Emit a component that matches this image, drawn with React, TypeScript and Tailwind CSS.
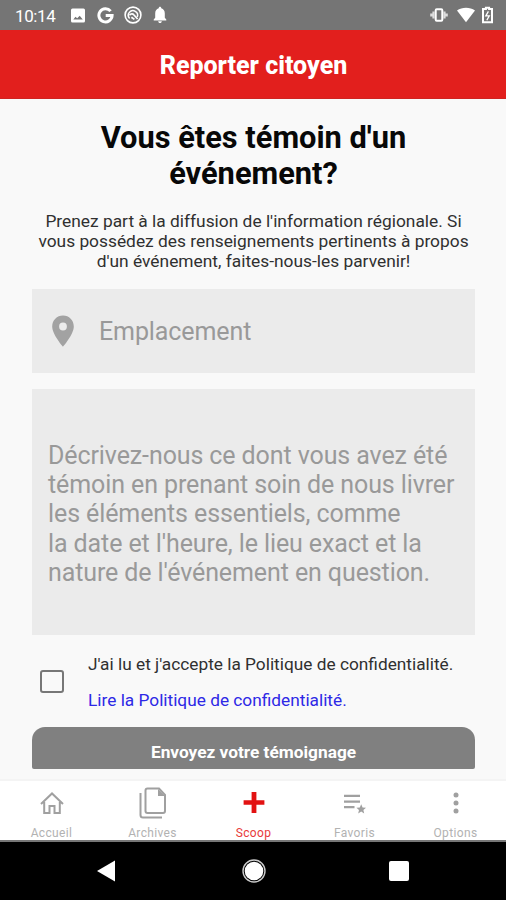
import type { ReactNode } from "react";

function StatusBar() {
  return (
    <header className="flex h-[30px] shrink-0 items-center bg-[#757575] pl-[15px] pr-[13px] text-white">
      <span className="w-[56px] pt-px text-[17px] leading-[30px] tracking-[-0.4px]">10:14</span>
      <svg className="h-[15px] w-[14px]" viewBox="0 0 14 15" fill="currentColor">
        <path fillRule="evenodd" d="M1.5 0.5h11a1.5 1.5 0 0 1 1.5 1.5v11a1.5 1.5 0 0 1-1.5 1.5h-11A1.5 1.5 0 0 1 0 13V2A1.5 1.5 0 0 1 1.5 .5ZM2.3 11.5h9.5L8.7 7.8 6.2 10.2 4.5 8.8Z" />
      </svg>
      <svg className="ml-[12px] h-[17px] w-[17px]" viewBox="0 0 17 17" fill="none" stroke="currentColor" strokeWidth="3">
        <path d="M13.6 4.1A6.6 6.6 0 1 0 15.1 8.5H8.7" />
      </svg>
      <svg className="ml-[10px] h-[18px] w-[18px]" viewBox="0 0 18 18" fill="none" stroke="currentColor">
        <circle cx="9" cy="9" r="7.9" strokeWidth="1.6" />
        <path d="M5.6 12.4A4.6 4.6 0 1 1 13.2 11" strokeWidth="1.5" />
        <path d="M5.4 9.2C7 7.4 8.8 7.6 10 9l3.6 4M7.4 11.2l3 2.2" strokeWidth="1.7" />
      </svg>
      <svg className="ml-[11px] h-[18px] w-[14px]" viewBox="0 0 14 18" fill="currentColor">
        <path d="M7 .8c.8 0 1.3.6 1.3 1.5 2.4.7 3.5 2.6 3.5 5.1v4.4l1.5 1.7v.9H.7v-.9l1.5-1.7V7.4c0-2.5 1.1-4.4 3.5-5.1C5.7 1.4 6.2.8 7 .8ZM5.2 15.2h3.6c0 1.1-.8 1.9-1.8 1.9s-1.8-.8-1.8-1.9Z" />
      </svg>
      <svg className="ml-auto h-[14px] w-[18px]" viewBox="0 0 18 14" fill="none" stroke="currentColor">
        <rect x="5.7" y="1.2" width="6.6" height="11.6" rx="1" strokeWidth="2" />
        <path d="M3.5 3.5v7M14.5 3.5v7M1.3 5.5v3M16.7 5.5v3" strokeWidth="2.2" opacity=".75" />
      </svg>
      <svg className="ml-[9px] h-[16px] w-[18px]" viewBox="0 0 18 16" fill="currentColor">
        <path d="M9 15.3 0 3.5C5-.2 13-.2 18 3.5Z" />
      </svg>
      <svg className="ml-[7px] h-[18px] w-[11px]" viewBox="0 0 11 18" fill="none" stroke="currentColor">
        <path d="M3.9 1.8h3.2v1.2h2.9v13.2H1V3h2.9Z" strokeWidth="2" />
        <path d="M6.4 5.3 3.8 9.8h3.5l-2.5 4.4" strokeWidth="1.3" />
      </svg>
    </header>
  );
}

function Tab({ label, active, children }: { label: string; active?: boolean; children: ReactNode }) {
  return (
    <div className={`flex w-[101px] flex-col items-center ${active ? "text-[#e21212]" : "text-[#a0a0a0]"}`}>
      <div className="flex h-[43px] shrink-0 items-center justify-center">{children}</div>
      <span className={`mt-[2px] shrink-0 text-[12px] leading-[14px] tracking-[0.35px] ${active ? "text-[#e83a3a]" : "text-[#b2b2b2]"}`}>{label}</span>
    </div>
  );
}

export default function App() {
  return (
    <div className="flex h-[900px] w-[506px] flex-col overflow-hidden bg-[#f9f9f9] font-[Roboto,sans-serif] whitespace-nowrap">
      <StatusBar />
      <div className="flex h-[69px] shrink-0 items-center justify-center border-b border-[#cf2421] bg-[#e21f1d] pt-[4px] pl-[1px] text-[25px] leading-[28px] font-extrabold text-white">
        Reporter citoyen
      </div>
      <main className="flex h-[680px] shrink-0 flex-col px-8">
        <h1 className="mt-[21px] ml-px text-center text-[30.8px] leading-[36px] font-bold text-[#080808]">
          Vous êtes témoin d'un<br />événement?
        </h1>
        <p className="mt-[19px] ml-px text-center text-[17.35px] leading-[20px] text-[#303030]">
          Prenez part à la diffusion de l'information régionale. Si<br />
          vous possédez des renseignements pertinents à propos<br />
          d'un événement, faites-nous-les parvenir!
        </p>
        <div className="mt-[18px] flex h-[84px] w-[443px] shrink-0 items-center bg-[#ebebeb] pl-[20px] text-[#999]">
          <svg className="h-[32px] w-[22px]" viewBox="0 0 22 32" fill="#a2a2a2">
            <path fillRule="evenodd" d="M11 .5C4.9.5.2 5.3.2 11.4.2 19.4 11 31.6 11 31.6S21.8 19.4 21.8 11.4C21.8 5.3 17.1.5 11 .5Zm0 7.1a3.9 3.9 0 1 1 0 7.8 3.9 3.9 0 0 1 0-7.8Z" />
          </svg>
          <span className="ml-[25px] pt-[2px] text-[25px] leading-[30px] tracking-[-0.1px]">Emplacement</span>
        </div>
        <div className="mt-[16px] flex h-[246px] w-[443px] shrink-0 items-center bg-[#ebebeb] pt-[4px] pl-[16px] text-[25px] leading-[29.1px] tracking-[-0.1px] text-[#999]">
          <p>
            Décrivez-nous ce dont vous avez été<br />
            témoin en prenant soin de nous livrer<br />
            les éléments essentiels, comme<br />
            la date et l'heure, le lieu exact et la<br />
            nature de l'événement en question.
          </p>
        </div>
        <div className="flex h-[92px] shrink-0 items-center pl-[8px] text-[17.28px]">
          <span className="h-[23px] w-[24px] rounded-[3px] border-[2px] border-[#777]" />
          <div className="ml-[24px] flex flex-col gap-[16px] pt-[2px] leading-[20px]">
            <span className="text-[#303030]">J'ai lu et j'accepte la Politique de confidentialité.</span>
            <span className="text-[#2e28e6]">Lire la Politique de confidentialité.</span>
          </div>
        </div>
        <button className="h-[42px] w-[443px] shrink-0 rounded-t-[13px] rounded-b-[2px] bg-[#808080] pt-[8px] text-[17.3px] leading-[34px] font-bold text-white">
          Envoyez votre témoignage
        </button>
      </main>
      <nav className="flex h-[63px] shrink-0 border-t-2 border-b-2 border-t-[#f4f4f4] border-b-[#777] bg-white pl-[1px]">
        <Tab label="Accueil">
          <svg className="h-[22px] w-[24px]" viewBox="0 0 24 22" fill="none" stroke="currentColor" strokeWidth="2">
            <path d="M1 12 12 1.5 23 12M4.2 10v11h5.3v-7h5v7h5.3V10" />
          </svg>
        </Tab>
        <Tab label="Archives">
          <svg className="h-[32px] w-[28px]" viewBox="0 0 28 32" fill="none" stroke="currentColor" strokeWidth="2">
            <path d="M8.5 1.5H20l6 6.5v16a2 2 0 0 1-2 2H8.5a2 2 0 0 1-2-2V3.5a2 2 0 0 1 2-2Z" />
            <path d="M19 2v7h7Z" fill="currentColor" stroke="none" />
            <path d="M1.5 6v22a2.5 2.5 0 0 0 2.5 2.5h19" />
          </svg>
        </Tab>
        <Tab label="Scoop" active>
          <svg className="h-[21px] w-[22px]" viewBox="0 0 22 21" fill="currentColor">
            <path d="M8.6 0h4.8v8.2h8v4.6h-8V21H8.6v-8.2h-8V8.2h8Z" />
          </svg>
        </Tab>
        <Tab label="Favoris">
          <svg className="mt-[2px] h-[20px] w-[22px]" viewBox="0 0 22 20" fill="currentColor">
            <path d="M0 .8h16v2.3H0ZM0 6.4h16v2.3H0ZM0 12h10.5v2.3H0ZM17.2 10.3l1.4 3.2 3.4.3-2.6 2.2.8 3.4-3-1.8-3 1.8.8-3.4-2.6-2.2 3.4-.3Z" />
          </svg>
        </Tab>
        <Tab label="Options">
          <svg className="ml-px h-[22px] w-[6px]" viewBox="0 0 6 22" fill="currentColor">
            <circle cx="3" cy="3" r="2.5" /><circle cx="3" cy="11" r="2.5" /><circle cx="3" cy="19" r="2.5" />
          </svg>
        </Tab>
      </nav>
      <footer className="flex h-[58px] shrink-0 items-center justify-between bg-black pr-[97px] pl-[97px]">
        <svg className="h-[22px] w-[18px]" viewBox="0 0 18 22" fill="white"><path d="M0 11 18 .5v21Z" /></svg>
        <svg className="ml-[3px] h-[24px] w-[24px]" viewBox="0 0 24 24">
          <circle cx="12" cy="12" r="9.3" fill="white" />
          <circle cx="12" cy="12" r="11" fill="none" stroke="#ccc" strokeWidth="1.4" />
        </svg>
        <span className="h-[20px] w-[20px] rounded-[2px] bg-white" />
      </footer>
    </div>
  );
}
